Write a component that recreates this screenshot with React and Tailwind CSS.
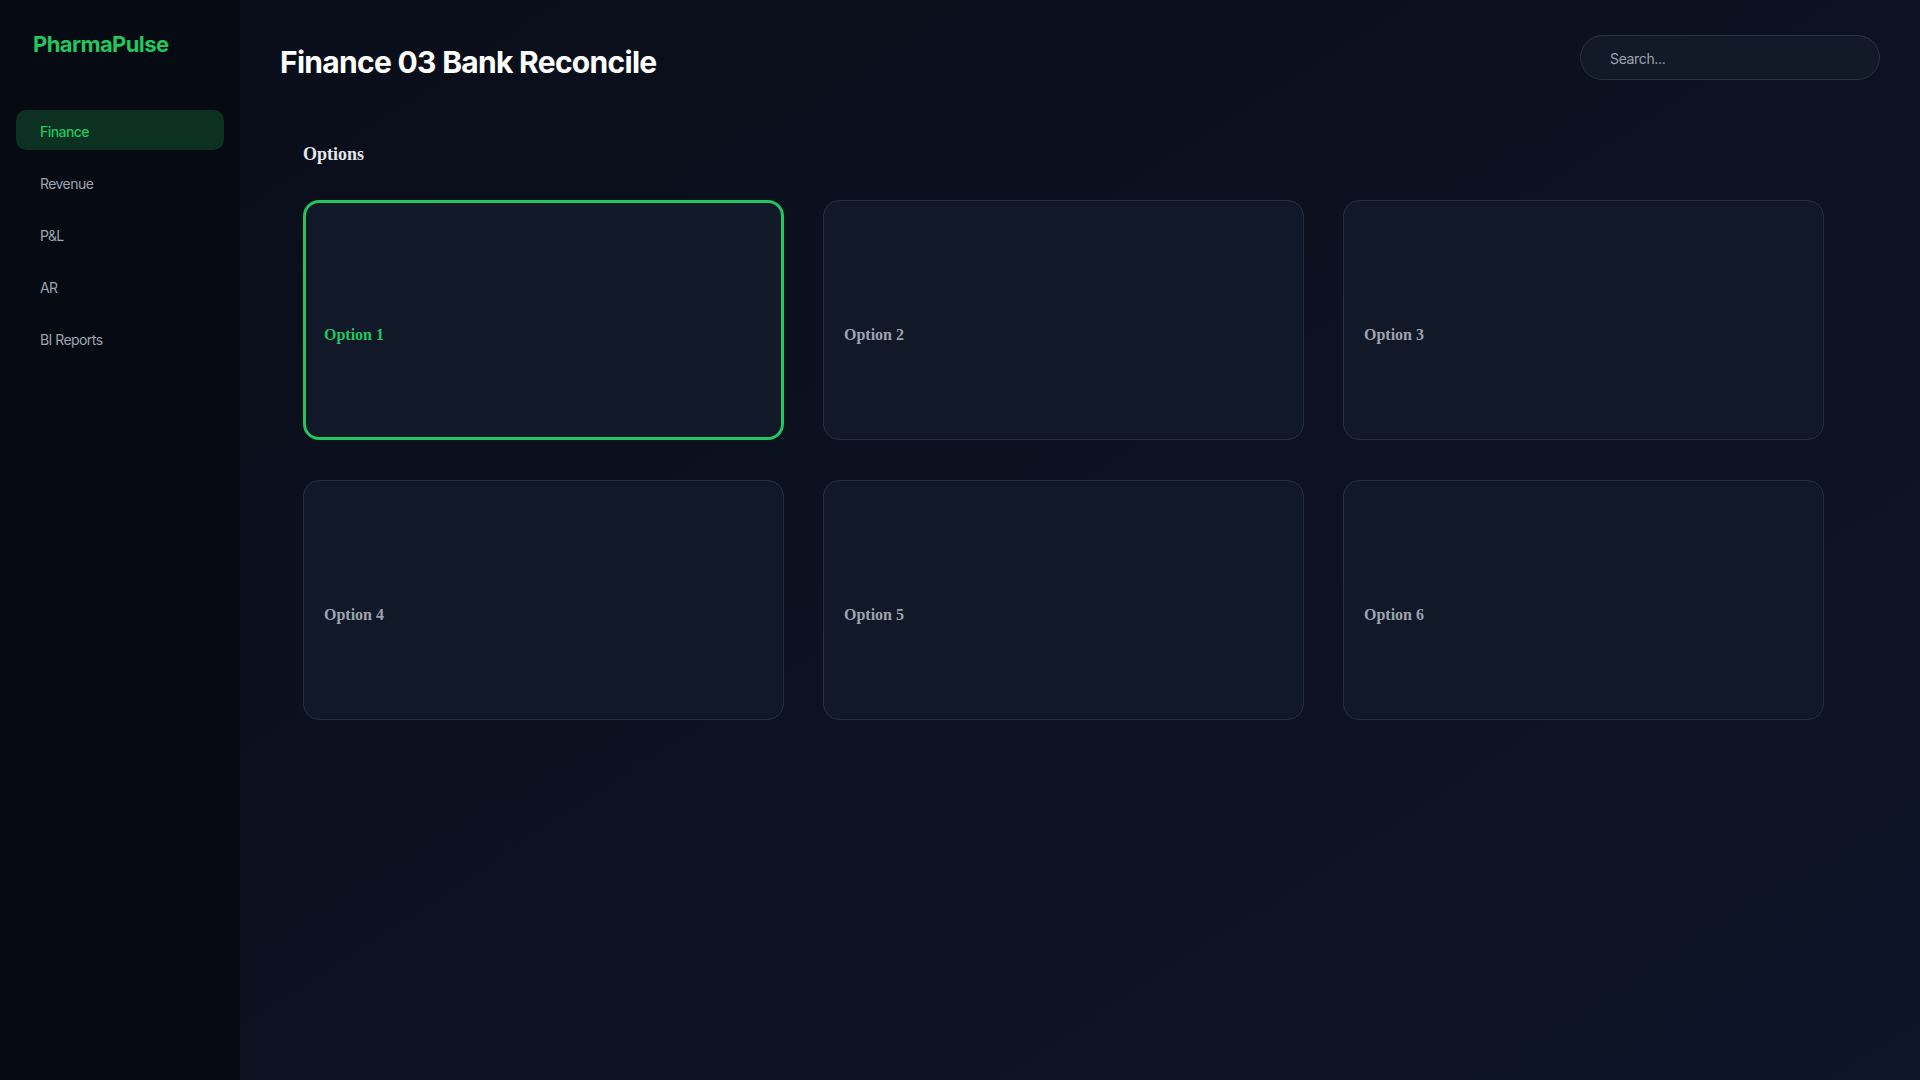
import { useState } from "react";

const NAV = ["Finance", "Revenue", "P&L", "AR", "BI Reports"];
const OPTIONS = ["Option 1", "Option 2", "Option 3", "Option 4", "Option 5", "Option 6"];

export default function App() {
  const [active, setActive] = useState("Finance");
  const [picked, setPicked] = useState(0);

  return (
    <div className="flex h-screen w-full font-['Inter',sans-serif] tracking-[-0.035em] bg-[#0b1120]">
      <aside className="w-[240px] shrink-0 bg-[#060a12] px-4 pt-[30px]">
        <div className="pl-[17px] text-[22px] leading-7 font-bold tracking-[-0.6px] text-[#22c55e]">PharmaPulse</div>
        <nav className="mt-[52px] space-y-3">
          {NAV.map(n => (
            <button key={n} onClick={() => setActive(n)}
              className={`flex h-10 w-full items-center rounded-[10px] px-6 pt-[3px] text-left text-sm ${
                active === n ? "bg-[#0c3022] text-[#22c55e] font-medium" : "text-[#9ca3af] hover:text-gray-200"
              }`}>
              {n}
            </button>
          ))}
        </nav>
      </aside>

      <main className="flex-1 bg-gradient-to-br from-[#0a0e1a] to-[#0e1528] px-10">
        <header className="flex items-start justify-between pt-[35px]">
          <h1 className="mt-[9px] h-9 text-3xl leading-9 font-bold tracking-[-0.7px] text-white">Finance 03 Bank Reconcile</h1>
          <input placeholder="Search..."
            className="h-[45px] w-[300px] rounded-full border border-[#283244] bg-[#121927] pl-[29px] pt-px text-sm tracking-tight text-gray-200 placeholder:text-[#9ca3af] focus:outline-none" />
        </header>

        <section className="mt-[60px] pl-[23px] font-['Liberation_Serif',serif] tracking-normal">
          <h2 className="text-lg leading-7 font-bold text-[#e5e7eb]">Options</h2>
          <div className="mt-8 grid grid-cols-[repeat(3,481px)] gap-x-[39px] gap-y-10">
            {OPTIONS.map((o, i) => (
              <button key={o} onClick={() => setPicked(i)}
                className={`flex h-[240px] items-center rounded-2xl bg-[#111827] pt-[30px] text-left text-base font-bold ${
                  picked === i ? "border-[3px] border-[#22c55e] px-[18px] text-[#22c55e]" : "border border-[#243042] px-5 text-[#9ca3af]"
                }`}>
                {o}
              </button>
            ))}
          </div>
        </section>
      </main>
    </div>
  );
}
